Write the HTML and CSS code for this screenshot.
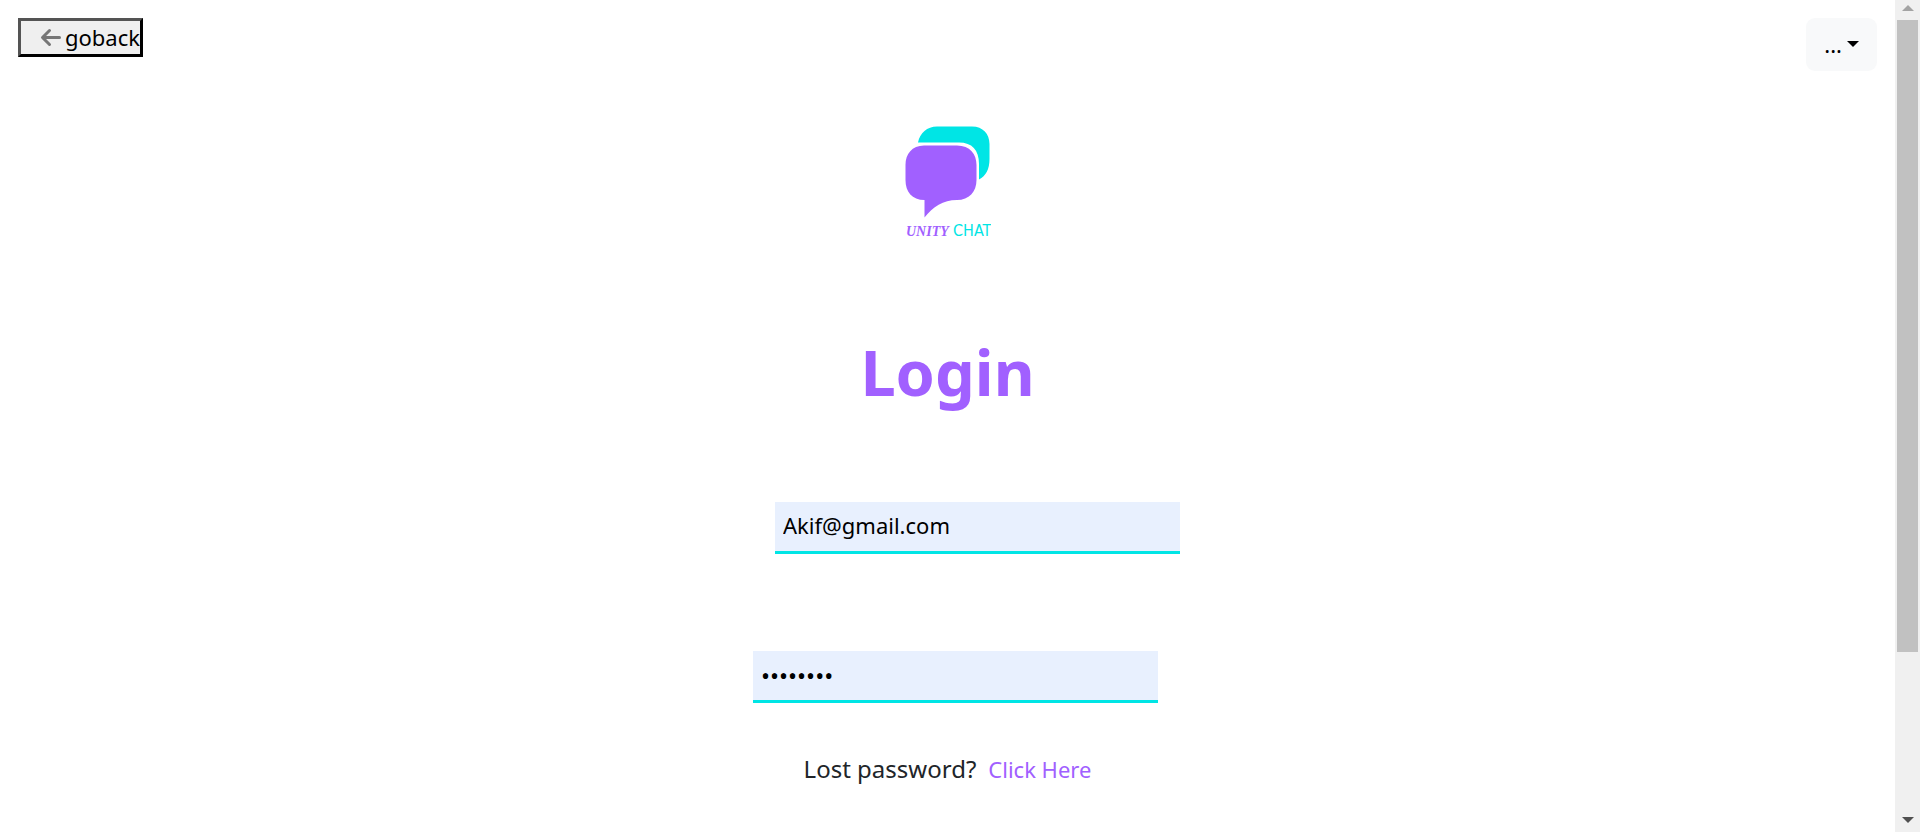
FILE: index.html
```html
<!DOCTYPE html>
<html lang="en">
<head>
<meta charset="utf-8">
<meta name="viewport" content="width=device-width, initial-scale=1">
<title>Unity Chat - Login</title>
<link rel="stylesheet" href="styles.css">
</head>
<body>
<div class="window">
  <div class="page">
    <header class="topbar">
      <button class="back" type="button">
        <svg class="back-icon" width="22" height="20" viewBox="0 0 22 20" aria-hidden="true"><path d="M19.500 9.500H3M9.500 2.500L2.500 9.500L9.500 16.500"/></svg>
        <span>goback</span>
      </button>
      <button class="menu" type="button" aria-haspopup="true">
        <span>...</span><span class="caret"></span>
      </button>
    </header>
    <main class="login">
      <svg class="logo" width="86" height="114" viewBox="0 0 86 114" role="img" aria-label="Unity Chat">
        <path fill="#00e5e5" d="M13 16.500C15 7 22 .5 32 .5H67C78 .5 84.500 8 84.500 18V33C84.500 43 81 50 74 53.500V38C74 24 67 16.500 54 16.500Z"/>
        <path fill="#a160ff" d="M19 19.500H52C65 19.500 71.500 28 71.500 39V54C71.500 66 64 74 52 74C38 74 28 81 19.500 91.500V74C7 74 .5 66 .5 54V39C.5 28 7 19.500 19 19.500Z"/>
        <text class="logo-unity" x="1" y="110">UNITY</text>
        <text class="logo-chat" x="48" y="110">CHAT</text>
      </svg>
      <h1 class="title">Login</h1>
      <form class="form">
        <input class="field field-email" type="email" value="Akif@gmail.com" aria-label="Email">
        <input class="field field-password" type="password" value="password" aria-label="Password">
        <p class="lost">Lost password?<a class="lost-link" href="#">Click Here</a></p>
      </form>
    </main>
  </div>
  <div class="scrollbar" aria-hidden="true">
    <span class="arrow arrow-up"></span>
    <span class="track"><span class="thumb"></span></span>
    <span class="arrow arrow-down"></span>
  </div>
</div>
</body>
</html>
```
FILE: styles.css
```css
* { box-sizing: border-box; }
body {
  margin: 0;
  background: #fff;
  color: #212529;
  font-family: "Segoe UI", "Noto Sans", sans-serif;
  font-size: 22px;
}
button, input { font: inherit; color: #000; }
.window { display: flex; height: 100vh; overflow: hidden; }
.page { flex: 1; }
.topbar { display: flex; justify-content: space-between; align-items: flex-start; padding: 18px; }
.back {
  display: flex;
  align-items: center;
  gap: 3px;
  padding: 0 0 0 19px;
  border: 3px outset #000;
  background: #efefef;
  line-height: 33px;
}
.back-icon { fill: none; stroke: #777; stroke-width: 3; stroke-linecap: round; stroke-linejoin: round; }
.menu {
  display: flex;
  align-items: center;
  gap: 5px;
  padding: 10px 18px;
  border: 0;
  border-radius: 9px;
  background: #f8f9fa;
  line-height: 33px;
}
.caret { margin-bottom: 2px; border: 6px solid transparent; border-top-color: #000; border-bottom: 0; }
.login { display: flex; flex-direction: column; align-items: center; padding-top: 37px; }
.logo { display: block; }
.logo-unity { font: italic bold 14px "Liberation Serif", serif; fill: #a160ff; }
.logo-chat { font: 16px "Liberation Sans Narrow", "DejaVu Sans Condensed", sans-serif; fill: #00e5e5; }
.title { margin: 90px 0 0; color: #a160ff; font-size: 63px; font-weight: 700; line-height: 84px; }
.form { display: flex; flex-direction: column; align-items: center; padding-top: 88px; }
.field {
  width: 405px;
  height: 52px;
  padding: 0 8px 3px;
  border: 0;
  border-bottom: 3px solid #00e5e5;
  border-radius: 0;
  background: #e8f0fe;
  outline: 0;
}
.field-email { margin-left: 60px; }
.field-password { margin: 97px 0 0 16px; padding: 0 8px; font-size: 24px; }
.lost { margin: 48px 0 0; font-size: 24px; line-height: 36px; }
.lost-link { margin-left: 12px; color: #a160ff; font-size: 22px; text-decoration: none; }
.scrollbar { display: flex; flex-direction: column; width: 25px; background: #f0f0f0; }
.track { flex: 1; padding: 0 2px; }
.thumb { display: block; height: 79.8%; background: #c1c1c1; }
.arrow { display: flex; align-items: center; justify-content: center; height: 20px; padding-bottom: 4px; }
.arrow::before { content: ""; border: 6px solid transparent; }
.arrow-up::before { border-top: 0; border-bottom-color: #a3a3a3; }
.arrow-down::before { border-bottom: 0; border-top-color: #505050; }
```
